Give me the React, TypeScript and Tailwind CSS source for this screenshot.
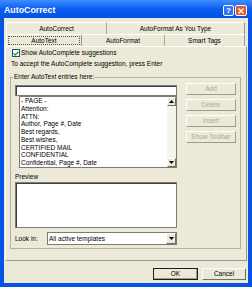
import React from "react";

function Tri({ up }: { up?: boolean }) {
  return (
    <svg width="5" height="3" viewBox="0 0 5 3">
      {up ? <polygon points="0,3 5,3 2.5,0" fill="#000" /> : <polygon points="0,0 5,0 2.5,3" fill="#000" />}
    </svg>
  );
}

function DisBtn({ label }: { label: string }) {
  return (
    <div className="w-[50px] h-[12px] flex items-center justify-center bg-[#ece9d8] border border-t-white border-l-white border-r-[#9e9b8e] border-b-[#9e9b8e] text-[#aca899]">
      {label}
    </div>
  );
}

const items = [
  "- PAGE -",
  "Attention:",
  "ATTN:",
  "Author, Page #, Date",
  "Best regards,",
  "Best wishes,",
  "CERTIFIED MAIL",
  "CONFIDENTIAL",
  "Confidential, Page #, Date",
];

export default function App() {
  return (
    <div className="w-[252px] h-[287px] flex flex-col bg-[#0553e4] font-['Liberation_Sans',Arial,sans-serif] text-[6.5px] leading-[8px] text-black overflow-hidden">
      {/* title bar */}
      <div className="h-[18px] flex items-center pl-[4px] pr-[5px] bg-gradient-to-b from-[#3d8dff] via-[#0a5cf0] to-[#0552e2]">
        <span className="text-white font-bold text-[8.8px] leading-[10px] mt-[2px]">AutoCorrect</span>
        <div className="ml-auto flex gap-[1px] self-start mt-[5px]">
          <div className="w-[11px] h-[11px] rounded-[2px] border border-white bg-[#2f74f6] flex items-center justify-center text-white font-bold text-[8px] leading-none">?</div>
          <div className="w-[12px] h-[11px] rounded-[2px] border border-white bg-[#e2582f] flex items-center justify-center">
            <svg width="6" height="6" viewBox="0 0 6 6"><path d="M0.5 0.5L5.5 5.5M5.5 0.5L0.5 5.5" stroke="#fff" strokeWidth="1.4" /></svg>
          </div>
        </div>
      </div>
      {/* body */}
      <div className="flex-1 mx-[4px] mb-[4px] bg-[#ece9d8] flex flex-col">
        {/* tabs row 1 */}
        <div className="flex ml-[2px] mt-[4px] h-[12px]">
          <div className="w-[101px] flex items-center justify-center border-t border-l border-white border-r border-r-[#aca899]">AutoCorrect</div>
          <div className="w-[138px] flex items-center justify-center border-t border-white border-r border-r-[#919b9c]">AutoFormat As You Type</div>
        </div>
        {/* tabs row 2 */}
        <div className="flex ml-[2px] h-[12px]">
          <div className="w-[76px] flex items-center justify-center border-t border-l border-white border-r border-r-[#919b9c]">
            <div className="w-[72px] h-[9px] flex items-center justify-center border border-dotted border-[#55534a]">AutoText</div>
          </div>
          <div className="w-[83px] flex items-center justify-center border-t border-white border-r border-r-[#aca899]">AutoFormat</div>
          <div className="w-[80px] flex items-center justify-center border-t border-white border-r border-r-[#919b9c]">Smart Tags</div>
        </div>
        {/* panel */}
        <div className="ml-[1px] w-[242px] h-[215px] border border-t-white border-l-white border-r-[#919b9c] border-b-[#919b9c] flex flex-col">
          <div className="flex items-center ml-[6px] mt-[2px] h-[8px]">
            <div className="w-[8px] h-[8px] bg-white border border-[#1c5180] flex items-center justify-center">
              <svg width="6" height="5" viewBox="0 0 6 5"><path d="M0.5 2.3L2.2 4L5.5 0.7" stroke="#21a121" strokeWidth="1.3" fill="none" /></svg>
            </div>
            <span className="ml-[1px]">Show AutoComplete suggestions</span>
          </div>
          <div className="ml-[5px] mt-[3px] h-[8px]">To accept the AutoComplete suggestion, press Enter</div>
          {/* group box */}
          <div className="ml-[4px] mt-[9px] w-[231px] h-[172px] border border-[#b3b0a2] flex flex-col">
            <span className="-mt-[5px] -mb-[3px] ml-[2px] px-[1px] h-[8px] w-fit bg-[#ece9d8]">Enter AutoText entries here:</span>
            <div className="flex mt-[5px]">
              <div className="ml-[4px] w-[162px] flex flex-col">
                <div className="mt-[2px] h-[11px] bg-white border border-[#7b7b7b] shadow-[inset_1px_1px_0_#404040]" />
                <div className="ml-[4px] w-[158px] h-[72px] bg-white border border-[#7b7b7b] flex">
                  <div className="flex-1 pl-[1px] leading-[7.75px] overflow-hidden">
                    {items.map((t) => (
                      <div key={t} className="h-[7.75px] whitespace-nowrap">{t}</div>
                    ))}
                  </div>
                  <div className="w-[9px] flex flex-col bg-[#f4f3ee]">
                    <div className="h-[9px] bg-[#ece9d8] border border-t-white border-l-white border-r-[#716f64] border-b-[#716f64] flex items-center justify-center"><Tri up /></div>
                    <div className="flex-1" />
                    <div className="h-[9px] bg-[#ece9d8] border border-t-white border-l-white border-r-[#716f64] border-b-[#716f64] flex items-center justify-center"><Tri /></div>
                  </div>
                </div>
              </div>
              <div className="ml-[9px] flex flex-col gap-[4px]">
                <DisBtn label="Add" />
                <DisBtn label="Delete" />
                <DisBtn label="Insert" />
                <DisBtn label="Show Toolbar" />
              </div>
            </div>
            <div className="ml-[4px] mt-[5px] h-[8px]">Preview</div>
            <div className="ml-[4px] mt-[1px] w-[162px] h-[46px] bg-white border border-[#7b7b7b] shadow-[inset_1px_1px_0_#404040]" />
            <div className="ml-[4px] mt-[4px] h-[13px] flex items-center">
              <span className="w-[32px]">Look in:</span>
              <div className="w-[130px] h-[13px] bg-white border border-[#7b7b7b] flex items-center">
                <span className="ml-[1px] flex-1">All active templates</span>
                <div className="w-[10px] h-[11px] bg-[#ece9d8] border border-t-white border-l-white border-r-[#716f64] border-b-[#716f64] flex items-center justify-center"><Tri /></div>
              </div>
            </div>
          </div>
        </div>
        {/* OK / Cancel */}
        <div className="flex justify-end gap-[4px] pr-[2px] mt-[7px]">
          <div className="w-[45px] h-[12px] flex items-center justify-center border border-[#1e1e1e] bg-[#ece9d8] shadow-[inset_-1px_-1px_0_#9e9b8e]">OK</div>
          <div className="w-[44px] h-[12px] flex items-center justify-center bg-[#ece9d8] border border-t-white border-l-white border-r-[#716f64] border-b-[#716f64]">Cancel</div>
        </div>
      </div>
    </div>
  );
}
